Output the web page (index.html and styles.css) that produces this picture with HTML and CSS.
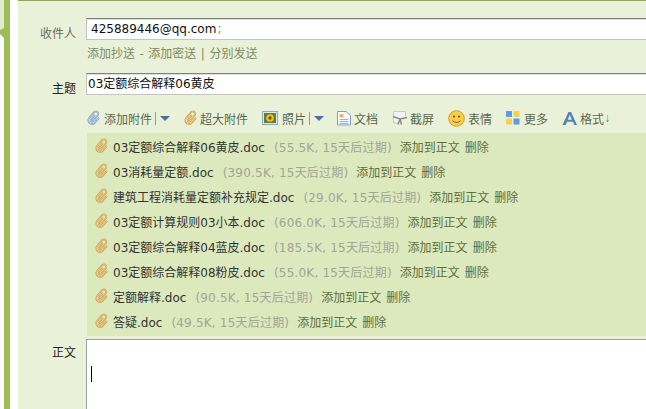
FILE: index.html
```html
<!DOCTYPE html>
<html>
  <head>
    <meta charset="utf-8">
    <link rel="stylesheet" href="styles.css">
  </head>
  <body>
    <svg class="defs" width="0" height="0">
      <symbol id="clip" viewBox="0 0 16 16">
        <g transform="translate(8 8) rotate(40) scale(.82) translate(-7.500 -8.200)" fill="none" stroke-linecap="round">
          <path class="clip-out" d="M6 5.500v6.500a1.500 1.500 0 0 0 3 0V3a3 3 0 0 0-6 0v9a4.500 4.500 0 0 0 9 0V5"/>
          <path class="clip-in" d="M6 5.500v6.500a1.500 1.500 0 0 0 3 0V3a3 3 0 0 0-6 0v9a4.500 4.500 0 0 0 9 0V5"/>
        </g>
      </symbol>
    </svg>
    <div class="sidebar">
      <svg class="tab" viewBox="0 0 4 38"><path d="M0 0h4v28L0 30z" fill="#dfe9cd"/><path d="M0 30l4-2v10l-1-1-3-3z" fill="#9dbd57"/></svg>
      <div class="bar"></div>
    </div>
    <div class="main">
      <div class="row row-to">
        <div class="label">收件人</div>
        <div class="field">
          <div class="input input-to">425889446@qq.com<span class="semi">;</span></div>
          <div class="links">添加抄送 - 添加密送 | 分别发送</div>
        </div>
      </div>
      <div class="row row-subject">
        <div class="label label-dark">主题</div>
        <div class="field"><div class="input input-subject">03定额综合解释06黄皮</div></div>
      </div>
      <div class="row">
        <div class="label"></div>
        <div class="field">
          <div class="toolbar">
            <span class="tool tool-add"><svg class="ico clip-blue"><use href="#clip"/></svg>添加附件<i class="sep"></i><i class="arrow"></i></span>
            <span class="tool tool-big"><svg class="ico clip-gold"><use href="#clip"/></svg>超大附件</span>
            <span class="tool tool-photo">
              <svg class="ico" viewBox="0 0 16 16"><rect x=".5" y="1.500" width="15" height="13" fill="#dfe8f5" stroke="#8fa6c8"/><rect x="2" y="3" width="12" height="10" fill="#5d7f3a"/><circle cx="8" cy="8" r="3.800" fill="#f2c21e"/><circle cx="8" cy="8" r="1.700" fill="#7a4b12"/></svg>照片<i class="sep"></i><i class="arrow"></i>
            </span>
            <span class="tool tool-doc">
              <svg class="ico" viewBox="0 0 14 16"><path d="M.5 1.500h8.500l4.500 4v9.500H.5z" fill="#fff" stroke="#7f9cc4"/><rect x="2.500" y="4" width="4" height="3.500" fill="#f0b070"/><path d="M2.500 9.500h9M2.500 11.500h9M2.500 13.500h9" stroke="#9db4d4"/></svg>文档
            </span>
            <span class="tool tool-shot">
              <svg class="ico" viewBox="0 0 16 16"><path d="M1.500 13V1.500h12V6" fill="#f2f2f2" stroke="#c8c8c8"/><path d="M1.500 13h4" stroke="#c8c8c8"/><path d="M1 6.500 8 9l7-1.500M8 9l1.500 5.500M6 14.500 8 9" fill="none" stroke="#8a8a8a" stroke-width="1.500"/></svg>截屏
            </span>
            <span class="tool tool-face">
              <svg class="ico ico-face" viewBox="0 0 17 17"><circle cx="8.500" cy="8.500" r="7.800" fill="#fbcf4a" stroke="#d39a2a"/><circle cx="6" cy="6.500" r="1" fill="#6b4a10"/><circle cx="11" cy="6.500" r="1" fill="#6b4a10"/><path d="M4.500 10.500c1.500 2.500 6.500 2.500 8 0" fill="none" stroke="#8a5a12"/></svg>表情
            </span>
            <span class="tool tool-more">
              <svg class="ico ico-more" viewBox="0 0 14 14"><rect width="6" height="6" rx=".5" fill="#5b9be8"/><rect x="7.500" width="6" height="6" rx=".5" fill="#fbd04f"/><rect y="7.500" width="6" height="6" rx=".5" fill="#fbd04f"/><rect x="7.500" y="7.500" width="6" height="6" rx=".5" fill="#5b9be8"/></svg>更多
            </span>
            <span class="tool tool-format">
              <svg class="ico" viewBox="0 0 16 14"><path d="M.5 14 6.500 1h2.500l6 13h-2.700l-1.300-3.200H5L3.700 14zM5.800 8.800h4L7.800 3.800z" fill="#5580bb"/></svg>格式<span class="down">↓</span>
            </span>
          </div>
          <div class="files">
            <div class="file"><svg class="ico clip-gold"><use href="#clip"/></svg><span class="name">03定额综合解释06黄皮.doc</span><span class="meta">(55.5K, 15天后过期)</span><span class="act">添加到正文</span><span class="act">删除</span></div>
            <div class="file"><svg class="ico clip-gold"><use href="#clip"/></svg><span class="name">03消耗量定额.doc</span><span class="meta">(390.5K, 15天后过期)</span><span class="act">添加到正文</span><span class="act">删除</span></div>
            <div class="file"><svg class="ico clip-gold"><use href="#clip"/></svg><span class="name">建筑工程消耗量定额补充规定.doc</span><span class="meta">(29.0K, 15天后过期)</span><span class="act">添加到正文</span><span class="act">删除</span></div>
            <div class="file"><svg class="ico clip-gold"><use href="#clip"/></svg><span class="name">03定额计算规则03小本.doc</span><span class="meta">(606.0K, 15天后过期)</span><span class="act">添加到正文</span><span class="act">删除</span></div>
            <div class="file"><svg class="ico clip-gold"><use href="#clip"/></svg><span class="name">03定额综合解释04蓝皮.doc</span><span class="meta">(185.5K, 15天后过期)</span><span class="act">添加到正文</span><span class="act">删除</span></div>
            <div class="file"><svg class="ico clip-gold"><use href="#clip"/></svg><span class="name">03定额综合解释08粉皮.doc</span><span class="meta">(55.0K, 15天后过期)</span><span class="act">添加到正文</span><span class="act">删除</span></div>
            <div class="file"><svg class="ico clip-gold"><use href="#clip"/></svg><span class="name">定额解释.doc</span><span class="meta">(90.5K, 15天后过期)</span><span class="act">添加到正文</span><span class="act">删除</span></div>
            <div class="file"><svg class="ico clip-gold"><use href="#clip"/></svg><span class="name">答疑.doc</span><span class="meta">(49.5K, 15天后过期)</span><span class="act">添加到正文</span><span class="act">删除</span></div>
          </div>
        </div>
      </div>
      <div class="row row-body">
        <div class="label label-dark label-body">正文</div>
        <div class="field"><div class="editor"><i class="caret"></i></div></div>
      </div>
    </div>
  </body>
</html>
```
FILE: styles.css
```css
html, body {
  margin: 0;
  height: 100%;
  overflow: hidden;
}
body {
  display: flex;
  width: 646px;
  height: 409px;
  background: #fff;
  font: 12px "DejaVu Sans", "Noto Sans CJK SC", sans-serif;
  color: #333;
}
.defs {
  display: none;
}
.sidebar {
  display: flex;
  flex: none;
  width: 10px;
  margin-right: 8px;
}
.tab {
  display: block;
  width: 4px;
  height: 38px;
}
.bar {
  width: 6px;
  background: #9dbd57;
}
.main {
  flex: 1;
  height: 409px;
  box-sizing: border-box;
  background: #e9f2d8;
  border-top: 1px solid #8fa84f;
  min-width: 0;
}
.row {
  display: flex;
}
.row-to {
  padding-top: 17px;
}
.row-subject {
  padding-top: 11px;
}
.label {
  width: 58px;
  flex: none;
  margin-right: 10px;
  padding-top: 9px;
  text-align: right;
  line-height: 14px;
  color: #6b6b5c;
}
.label-dark {
  color: #222;
}
.label-body {
  padding-top: 7px;
}
.field {
  flex: 1;
  min-width: 0;
}
.input {
  height: 22px;
  box-sizing: border-box;
  padding-left: 4px;
  background: #fff;
  border: 1px solid #c4c4c4;
  border-top-color: #808080;
  border-right: 0;
  box-shadow: inset 0 1px #dedede;
  line-height: 21px;
  color: #111;
}
.semi {
  margin-left: 1px;
  color: #888;
}
.input-subject {
  padding-left: 1px;
}
.links {
  margin-top: 6px;
  padding-left: 1px;
  line-height: 16px;
  word-spacing: .7px;
  color: #7c8a62;
}
.toolbar {
  display: flex;
  align-items: center;
  height: 37px;
  box-sizing: border-box;
  padding-top: 7px;
  color: #5c6650;
}
.tool {
  display: flex;
  align-items: center;
  flex: none;
}
.ico {
  width: 16px;
  height: 16px;
  flex: none;
}
.clip-out {
  stroke: var(--clip-out);
  stroke-width: 2.100;
}
.clip-in {
  stroke: var(--clip-in);
  stroke-width: .8;
}
.clip-blue {
  --clip-out: #6f93c4;
  --clip-in: #d3e2f6;
}
.clip-gold {
  --clip-out: #c9943f;
  --clip-in: #f6dc9f;
}
.sep {
  width: 1px;
  height: 13px;
  margin: 0 4px 0 3px;
  background: #999;
}
.arrow {
  width: 0;
  height: 0;
  border: 5px solid transparent;
  border-top-color: #4a6ea9;
  border-bottom: 0;
}
.tool-add .ico {
  margin-right: 2px;
}
.tool-big {
  margin-left: 13px;
}
.tool-big .ico {
  margin-right: 1px;
}
.tool-photo {
  margin-left: 14px;
}
.tool-photo .ico {
  margin-right: 4px;
}
.tool-doc {
  margin-left: 13px;
}
.tool-doc .ico {
  width: 14px;
  margin-right: 3px;
}
.tool-shot {
  margin-left: 14px;
}
.tool-shot .ico {
  margin-right: 2px;
}
.tool-face {
  margin-left: 14px;
}
.tool-face .ico-face {
  width: 17px;
  height: 17px;
  margin-right: 3px;
}
.tool-more {
  margin-left: 14px;
}
.tool-more .ico-more {
  width: 14px;
  height: 14px;
  margin-right: 4px;
}
.tool-format {
  margin-left: 14px;
}
.tool-format .ico {
  margin-right: 2px;
}
.down {
  font-family: "Liberation Sans", sans-serif;
  color: #777;
}
.files {
  margin-left: 1px;
  padding: 1px 0 2px 7px;
  background: #dce9bd;
}
.file {
  display: flex;
  align-items: center;
  height: 25px;
  box-sizing: border-box;
  padding-bottom: 1px;
  white-space: nowrap;
}
.file .ico {
  margin-right: 3px;
}
.name {
  color: #333;
}
.meta {
  margin: 0 8px 0 9px;
  letter-spacing: .2px;
  color: #a2a497;
}
.act {
  margin-right: 5px;
  color: #5f6e3c;
}
.row-body {
  padding-top: 3px;
}
.editor {
  height: 71px;
  box-sizing: border-box;
  padding: 26px 4px 0;
  background: #fff;
  border-top: 1px solid #a0a0a0;
  border-left: 1px solid #a0a0a0;
}
.caret {
  display: block;
  width: 1px;
  height: 16px;
  background: #000;
}
```
